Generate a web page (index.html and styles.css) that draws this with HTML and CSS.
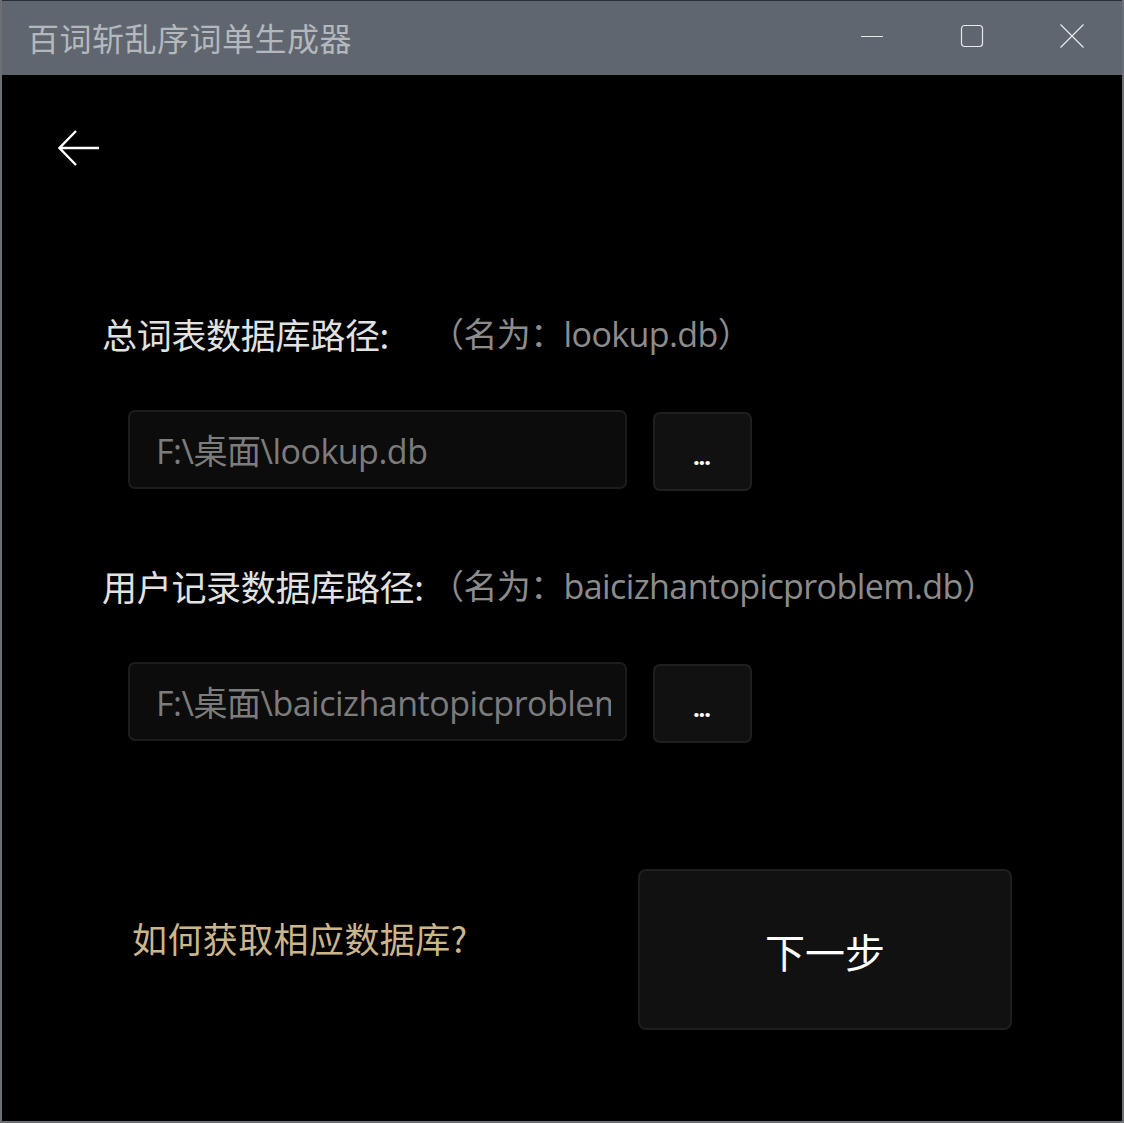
FILE: index.html
```html
<!DOCTYPE html>
<html lang="zh-CN">
<head>
<meta charset="utf-8">
<title>百词斩乱序词单生成器</title>
<link rel="stylesheet" href="styles.css">
</head>
<body>
<div class="window">
  <div class="titlebar">
    <div class="title">百词斩乱序词单生成器</div>
    <div class="controls">
      <div class="ctl">
        <svg width="24" height="24" viewBox="0 0 24 24"><line x1="1" y1="12.5" x2="23" y2="12.5" stroke="#e6e8ea" stroke-width="1"/></svg>
      </div>
      <div class="ctl">
        <svg width="24" height="24" viewBox="0 0 24 24"><rect x="1.5" y="1.5" width="21" height="21" rx="3" fill="none" stroke="#e6e8ea" stroke-width="1.2"/></svg>
      </div>
      <div class="ctl">
        <svg width="26" height="26" viewBox="0 0 26 26"><path d="M1.5 1.5 L24.5 24.5 M24.5 1.5 L1.5 24.5" stroke="#e6e8ea" stroke-width="1.2" fill="none"/></svg>
      </div>
    </div>
  </div>
  <div class="content">
    <div class="back">
      <svg width="42" height="38" viewBox="0 0 42 38"><path d="M1.5 19 H41 M18 2 L1.5 19 L18 36" stroke="#ffffff" stroke-width="2.4" fill="none" stroke-linejoin="miter"/></svg>
    </div>

    <div class="label-row first">
      <span class="label">总词表数据库路径:</span><span class="hint">（名为：lookup.db）</span>
    </div>
    <div class="field-row">
      <div class="input"><span class="input-text">F:\桌面\lookup.db</span></div>
      <div class="browse">...</div>
    </div>

    <div class="label-row second">
      <span class="label">用户记录数据库路径:</span><span class="hint">（名为：baicizhantopicproblem.db）</span>
    </div>
    <div class="field-row">
      <div class="input"><span class="input-text">F:\桌面\baicizhantopicproblem.db</span></div>
      <div class="browse">...</div>
    </div>

    <div class="action-row">
      <div class="link">如何获取相应数据库?</div>
      <div class="next">下一步</div>
    </div>
  </div>
</div>
</body>
</html>
```

FILE: styles.css
```css
* { box-sizing: border-box; }
html, body { margin: 0; padding: 0; background: #000; }
body {
  font-family: "Noto Sans", "Noto Sans CJK SC", sans-serif;
}
.window {
  width: 1124px;
  height: 1123px;
  background: #000;
  border: 2px solid #6c7075;
  border-top: 0;
  display: flex;
  flex-direction: column;
  overflow: hidden;
}
.titlebar {
  height: 75px;
  background: #5f6670;
  border-top: 1px solid #2a2d31;
  display: flex;
  align-items: center;
  flex-shrink: 0;
}
.title {
  margin-left: 25px;
  font-family: "Noto Sans CJK SC", sans-serif;
  font-size: 32px;
  color: #b4b8bd;
  letter-spacing: 0.5px;
  margin-top: -2px;
}
.controls {
  margin-left: auto;
  display: flex;
  align-items: center;
  margin-right: 0;
}
.ctl {
  width: 100px;
  display: flex;
  justify-content: center;
  align-items: center;
  margin-top: -4px;
}
.content {
  flex: 1;
  display: flex;
  flex-direction: column;
  padding-left: 100px;
}
.back {
  margin-left: -44px;
  margin-top: 54px;
  height: 38px;
}
.label-row {
  display: flex;
  align-items: center;
  height: 44px;
  line-height: 44px;
}
.label-row.first { margin-top: 145px; }
.label-row.second { margin-top: 73px; }
.label {
  color: #e2e2e2;
  width: 328px;
  white-space: nowrap;
  font-size: 35px;
  font-family: "Noto Sans CJK SC", sans-serif;
  letter-spacing: -0.3px;
}
.hint {
  color: #8c8c8c;
  white-space: nowrap;
  font-size: 34px;
  font-family: "Open Sans", "Noto Sans CJK SC", sans-serif;
  letter-spacing: -0.6px;
}
.field-row {
  display: flex;
  margin-top: 54px;
  margin-left: 26px;
}
.input {
  width: 499px;
  height: 79px;
  background: #0c0c0c;
  border: 2px solid #1c1c1c;
  border-radius: 7px;
  padding-left: 26px;
  padding-right: 14px;
  display: flex;
  align-items: center;
}
.input-text {
  display: block;
  width: 100%;
  overflow: hidden;
  white-space: nowrap;
  color: #7c7c7c;
  font-size: 34px;
  line-height: 44px;
  padding-top: 3px;
  font-family: "Open Sans", "Noto Sans CJK SC", sans-serif;
  letter-spacing: -0.5px;
}
.browse {
  width: 99px;
  height: 79px;
  margin-left: 26px;
  margin-top: 2px;
  background: #111111;
  border: 2px solid #1f1f1f;
  border-radius: 7px;
  color: #ffffff;
  font-size: 24px;
  font-weight: 700;
  display: flex;
  align-items: center;
  justify-content: center;
  padding-top: 8px;
  padding-right: 2px;
  letter-spacing: -1px;
}
.action-row {
  display: flex;
  align-items: center;
  margin-top: 126px;
  padding-left: 30px;
}
.link {
  color: #cbb68c;
  font-size: 35px;
  letter-spacing: 0.4px;
  font-family: "Noto Sans CJK SC", sans-serif;
  margin-bottom: 24px;
}
.next {
  margin-left: auto;
  margin-right: 110px;
  width: 374px;
  height: 161px;
  background: #111111;
  border: 2px solid #1e1e1e;
  border-radius: 8px;
  color: #ffffff;
  font-size: 40px;
  font-family: "Noto Sans CJK SC", sans-serif;
  display: flex;
  align-items: center;
  justify-content: center;
  padding-top: 2px;
}
```
